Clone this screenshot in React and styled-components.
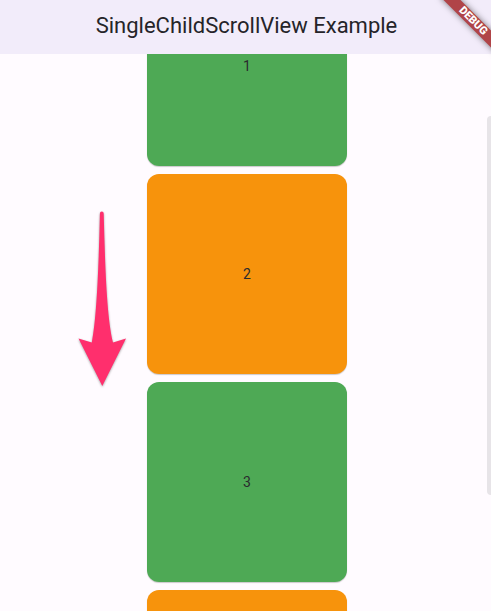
import React, { useLayoutEffect, useRef, useState } from "react";
import styled, { createGlobalStyle } from "styled-components";

const GlobalStyle = createGlobalStyle`
  * { box-sizing: border-box; }
  body {
    margin: 0;
    background: #fffbff;
    color: #1c1b1f;
    font-family: Roboto, "Liberation Sans", sans-serif;
  }
`;

const Screen = styled.div`
  position: relative;
  display: flex;
  flex-direction: column;
  height: 100vh;
  overflow: hidden;
`;

const AppBar = styled.header`
  display: flex;
  flex: none;
  align-items: center;
  justify-content: center;
  height: 54px;
  padding: 0 0 2px 2px;
  background: #f2ecfa;
`;

const Title = styled.h1`
  margin: 0;
  color: #252429;
  font-size: 22px;
  font-weight: 400;
  line-height: 28px;
  white-space: nowrap;
`;

const DebugCorner = styled.div`
  position: absolute;
  top: 0;
  right: 0;
  width: 80px;
  height: 80px;
  overflow: hidden;
  pointer-events: none;
`;

const DebugRibbon = styled.div`
  position: absolute;
  top: 15px;
  right: -22px;
  width: 80px;
  height: 12px;
  background: #b04448;
  box-shadow: 0 0 6px rgba(0, 0, 0, 0.5);
  color: #fff;
  font-size: 11px;
  font-weight: 900;
  line-height: 12px;
  text-align: center;
  transform: rotate(45deg);
`;

const Body = styled.div`
  position: relative;
  flex: 1;
  min-height: 0;
`;

const ScrollView = styled.main`
  height: 100%;
  overflow-y: auto;
  scrollbar-width: none;
`;

const CardList = styled.div`
  display: flex;
  flex-direction: column;
  align-items: center;
  gap: 8px;
  padding: 4px 0 0 3px;
`;

const Card = styled.section`
  display: flex;
  flex: none;
  align-items: center;
  justify-content: center;
  width: 200px;
  height: 200px;
  border-radius: 12px;
  background: ${({ $color }) => $color};
  box-shadow: 0 1px 1px rgba(0, 0, 0, 0.2);
  color: #2b2a2e;
  font-size: 14px;
  line-height: 20px;
`;

const Thumb = styled.div`
  position: absolute;
  right: 0;
  width: 4px;
  border-radius: 4px 0 0 4px;
  background: #e7e4e8;
`;

const Arrow = styled.svg`
  position: absolute;
  top: 154px;
  left: 74px;
  width: 56px;
  height: 184px;
  filter: drop-shadow(0 1px 1px rgba(0, 0, 0, 0.35));
`;

const cards = [
  { label: "1", color: "#4ea955" },
  { label: "2", color: "#f7930c" },
  { label: "3", color: "#4ea955" },
  { label: "4", color: "#f7930c" },
];

const INITIAL_SCROLL = 92;

export default function App() {
  const view = useRef(null);
  const [thumb, setThumb] = useState({ top: "0%", height: "100%" });

  const updateThumb = () => {
    const { scrollTop, scrollHeight, clientHeight } = view.current;
    setThumb({
      top: `${(scrollTop / scrollHeight) * 100}%`,
      height: `calc(${(clientHeight / scrollHeight) * 100}% + 4px)`,
    });
  };

  useLayoutEffect(() => {
    view.current.scrollTop = INITIAL_SCROLL;
    updateThumb();
    window.addEventListener("resize", updateThumb);
    return () => window.removeEventListener("resize", updateThumb);
  }, []);

  return (
    <>
      <GlobalStyle />
      <Screen>
        <AppBar>
          <Title>SingleChildScrollView Example</Title>
        </AppBar>
        <Body>
          <ScrollView ref={view} onScroll={updateThumb}>
            <CardList>
              {cards.map(({ label, color }) => (
                <Card key={label} $color={color}>
                  {label}
                </Card>
              ))}
            </CardList>
          </ScrollView>
          <Arrow viewBox="0 0 56 184" aria-hidden="true">
            <path
              d="M25.9 5.5Q25.9 3.5 27.8 3.5Q29.7 3.5 29.7 5.5C31 54 32.5 108 39 134.5L52 130.5L28.3 178L4.5 130.5L17.8 134.5C23 108 24.8 54 25.9 5.5Z"
              fill="#ff2f6d"
            />
          </Arrow>
          <Thumb style={thumb} />
        </Body>
        <DebugCorner>
          <DebugRibbon>DEBUG</DebugRibbon>
        </DebugCorner>
      </Screen>
    </>
  );
}
